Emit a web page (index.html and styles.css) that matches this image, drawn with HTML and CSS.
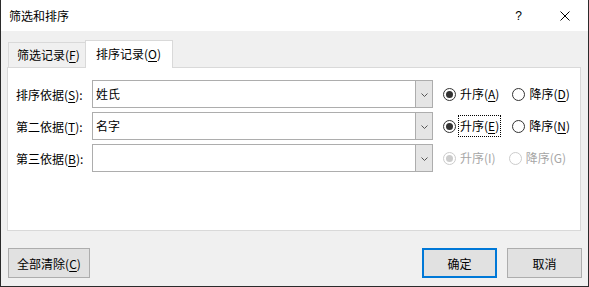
FILE: index.html
```html
<!DOCTYPE html>
<html lang="zh-CN">
<head>
    <meta charset="UTF-8">
    <title>筛选和排序</title>
    <link rel="stylesheet" href="styles.css">
</head>
<body>
    <div class="dialog">
        <div class="titlebar">
            <span class="title">筛选和排序</span>
            <span class="help">?</span>
            <svg class="close" width="10" height="10" viewBox="0 0 10 10">
                <path d="M0.5 0.5 L9.5 9.5 M9.5 0.5 L0.5 9.5" stroke="#000" stroke-width="1" fill="none"/>
            </svg>
        </div>

        <div class="content">
            <div class="tabs">
                <div class="tab">筛选记录(<u>F</u>)</div>
                <div class="tab active">排序记录(<u>O</u>)</div>
            </div>

            <div class="panel">
                <div class="row">
                    <label class="label">排序依据(<u>S</u>):</label>
                    <div class="combo">
                        <span class="combo-text">姓氏</span>
                        <span class="combo-btn"><svg width="7" height="4" viewBox="0 0 7 4"><path d="M0.5 0.5 L3.5 3.5 L6.5 0.5" stroke="#555" fill="none"/></svg></span>
                    </div>
                    <div class="radios">
                        <span class="radio checked"><i></i><span class="rtext">升序(<u>A</u>)</span></span>
                        <span class="radio"><i></i><span class="rtext">降序(<u>D</u>)</span></span>
                    </div>
                </div>
                <div class="row">
                    <label class="label">第二依据(<u>T</u>):</label>
                    <div class="combo">
                        <span class="combo-text">名字</span>
                        <span class="combo-btn"><svg width="7" height="4" viewBox="0 0 7 4"><path d="M0.5 0.5 L3.5 3.5 L6.5 0.5" stroke="#555" fill="none"/></svg></span>
                    </div>
                    <div class="radios">
                        <span class="radio checked"><i></i><span class="rtext focus">升序(<u>E</u>)</span></span>
                        <span class="radio"><i></i><span class="rtext">降序(<u>N</u>)</span></span>
                    </div>
                </div>
                <div class="row">
                    <label class="label">第三依据(<u>B</u>):</label>
                    <div class="combo">
                        <span class="combo-text"></span>
                        <span class="combo-btn"><svg width="7" height="4" viewBox="0 0 7 4"><path d="M0.5 0.5 L3.5 3.5 L6.5 0.5" stroke="#555" fill="none"/></svg></span>
                    </div>
                    <div class="radios disabled">
                        <span class="radio checked"><i></i><span class="rtext">升序(I)</span></span>
                        <span class="radio"><i></i><span class="rtext">降序(G)</span></span>
                    </div>
                </div>
            </div>

            <div class="footer">
                <button class="btn clear">全部清除(<u>C</u>)</button>
                <div class="spacer"></div>
                <button class="btn default">确定</button>
                <button class="btn">取消</button>
            </div>
        </div>
    </div>
</body>
</html>
```

FILE: styles.css
```css
body {
    margin: 0;
    font-family: "Noto Sans CJK SC", "Noto Sans", sans-serif;
    font-size: 12px;
    color: #000;
    background: #fff;
}
u {
    text-decoration: underline;
    text-underline-offset: 2px;
}
.dialog {
    width: 589px;
    height: 287px;
    box-sizing: border-box;
    border: 1px solid #2b2b2b;
    border-top: none;
    display: flex;
    flex-direction: column;
}
.titlebar {
    height: 31px;
    background: #fff;
    display: flex;
    align-items: center;
    padding-left: 8px;
    line-height: 16px;
}
.title {
    flex: 1;
}
.help {
    font-family: "Liberation Sans", sans-serif;
    font-size: 12px;
    margin-right: 38px;
}
.close {
    margin-right: 18px;
}
.content {
    flex: 1;
    background: #f0f0f0;
    padding: 9px 7px 0 6px;
    display: flex;
    flex-direction: column;
}
.tabs {
    display: flex;
    align-items: flex-end;
    height: 27px;
    padding-left: 1px;
}
.tab {
    height: 25px;
    width: 77px;
    box-sizing: border-box;
    border: 1px solid #d9d9d9;
    border-bottom: none;
    border-right: none;
    background: #f0f0f0;
    padding-left: 8px;
    line-height: 24px;
}
.tab.active {
    position: relative;
    z-index: 1;
    height: 28px;
    width: 88px;
    margin-bottom: -1px;
    background: #fff;
    border-right: 1px solid #d9d9d9;
    padding-left: 10px;
    line-height: 26px;
}
.panel {
    height: 164px;
    box-sizing: border-box;
    border: 1px solid #d9d9d9;
    background: #fff;
    padding: 12px 0 0 8px;
    display: flex;
    flex-direction: column;
    gap: 4px;
}
.row {
    display: flex;
    align-items: center;
    height: 28px;
}
.label {
    width: 76px;
    padding-top: 1px;
}
.combo {
    width: 341px;
    height: 28px;
    box-sizing: border-box;
    border: 1px solid #adadad;
    background: #fff;
    display: flex;
}
.combo-text {
    flex: 1;
    padding-left: 3px;
    line-height: 26px;
}
.combo-btn {
    width: 16px;
    background: #e5e5e5;
    border-left: 1px solid #adadad;
    display: flex;
    align-items: center;
    justify-content: center;
    padding-top: 1px;
}
.radios {
    display: flex;
    margin-left: 10px;
    gap: 11px;
}
.radio {
    display: flex;
    align-items: center;
    gap: 2px;
}
.radio i {
    width: 13px;
    height: 13px;
    box-sizing: border-box;
    border: 1px solid #333;
    border-radius: 50%;
    display: flex;
    align-items: center;
    justify-content: center;
}
.radio.checked i::after {
    content: "";
    width: 7px;
    height: 7px;
    border-radius: 50%;
    background: #333;
}
.rtext {
    padding: 1px 1px 2px 1px;
    border: 1px dotted transparent;
}
.rtext.focus {
    border-color: #000;
}
.disabled .radio i {
    border-color: #cccccc;
}
.disabled .radio.checked i::after {
    background: #cccccc;
}
.disabled .rtext {
    color: #a6a6a6;
}
.footer {
    display: flex;
    margin-top: 17px;
    padding-left: 1px;
}
.spacer {
    flex: 1;
}
.btn {
    height: 30px;
    width: 75px;
    box-sizing: border-box;
    border: 1px solid #adadad;
    background: #e1e1e1;
    font-family: inherit;
    font-size: 12px;
    color: #000;
    padding: 0;
    margin-left: 10px;
}
.btn.clear {
    width: 82px;
    margin-left: 0;
}
.btn.default {
    border: 2px solid #0078d7;
}
.footer .btn:last-child {
    margin-right: -1px;
}
```
